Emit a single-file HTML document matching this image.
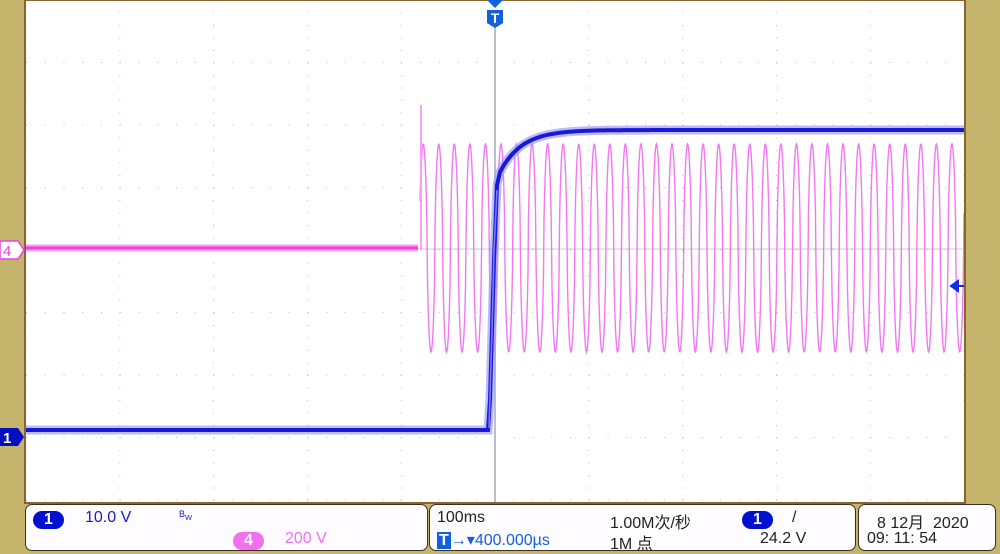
<!DOCTYPE html>
<html><head><meta charset="utf-8"><style>
body{margin:0;width:1000px;height:554px;background:#c4b46c;overflow:hidden;font-family:"Liberation Sans","Noto Sans CJK SC",sans-serif;position:relative}
.box{position:absolute;top:504px;height:47px;background:#fffcff;border:1.5px solid #3a3020;border-radius:7px;box-sizing:border-box}
.t{position:absolute;font-size:16px;white-space:nowrap}
.pill{position:absolute;border-radius:9px;color:#fff;font-weight:bold;font-size:16px;text-align:center;line-height:18px;height:18px;width:31px}
</style></head><body>
<svg id="s" width="1000" height="504" style="position:absolute;left:0;top:0">
<rect x="25" y="0" width="940" height="503" fill="#fff"/>
<g id="grid" fill="#b8bcc8"></g>
<line x1="495" y1="26" x2="495" y2="503" stroke="#b8c0cc" stroke-width="2"/>
<line x1="26" y1="249" x2="964" y2="249" stroke="#c8ccd4" stroke-width="1"/>
<path id="pink" fill="none" stroke="#f060f0" stroke-width="1.4" opacity="0.85"/>
<line x1="26" y1="248" x2="418" y2="248" stroke="#f8a0f0" stroke-width="7"/>
<line x1="26" y1="248" x2="418" y2="248" stroke="#f040e0" stroke-width="3"/>
<line x1="421" y1="105" x2="421" y2="250" stroke="#f8a0f8" stroke-width="2"/>
<path id="blueh" fill="none" stroke="#a0a0f8" stroke-width="9" opacity="0.7"/>
<path id="blue" fill="none" stroke="#1818d8" stroke-width="4"/>
<path d="M489,428 L492,330 L494,250 L497,190" fill="none" stroke="#8080f0" stroke-width="1.5"/>
<rect x="25" y="0" width="940" height="503" fill="none" stroke="#8a6430" stroke-width="2"/>
<path d="M487,0 L503,0 L495,8 Z" fill="#1060e0"/>
<path d="M487,10 L503,10 L503,23 L495,28 L487,23 Z" fill="#1060e0"/>
<text x="495" y="23" text-anchor="middle" fill="#fff" font-size="14" font-weight="bold" font-family="Liberation Sans">T</text>
<path d="M0,241 L18,241 L24,250 L18,259 L0,259 Z" fill="#fff" stroke="#f040e0" stroke-width="1.5"/>
<text x="3" y="256" fill="#f040e0" font-size="15" font-family="Liberation Sans">4</text>
<path d="M0,428 L18,428 L24,437 L18,446 L0,446 Z" fill="#0010c0"/>
<text x="3" y="443" fill="#fff" font-size="15" font-weight="bold" font-family="Liberation Sans">1</text>
<path d="M951,286 L958,281 L958,291 Z M956,286 L964,286" fill="#1030e0" stroke="#1030e0" stroke-width="2"/>
</svg>
<div class="box" style="left:25px;width:403px"></div>
<div class="box" style="left:429px;width:427px"></div>
<div class="box" style="left:858px;width:138px"></div>
<div class="pill" style="left:33px;top:511px;background:#0010d0">1</div>
<div class="t" style="left:85px;top:509px;color:#1a1ad0">10.0 V</div>
<div class="t" style="left:179px;top:509px;color:#1a1ad0;font-size:9px">B<sub>W</sub></div>
<div class="pill" style="left:233px;top:532px;background:#f070f0">4</div>
<div class="t" style="left:285px;top:530px;color:#f070f0">200 V</div>
<div class="t" style="left:437px;top:509px;color:#222">100ms</div>
<div class="t" style="left:437px;top:530px;color:#1060e0"><span style="background:#1060e0;color:#fff;font-weight:bold;padding:0 2px">T</span>→▾400.000µs</div>
<div class="t" style="left:610px;top:509px;color:#222">1.00M次/秒</div>
<div class="t" style="left:610px;top:530px;color:#222">1M 点</div>
<div class="pill" style="left:742px;top:511px;background:#0010d0">1</div>
<div class="t" style="left:792px;top:509px;color:#222">/</div>
<div class="t" style="left:760px;top:530px;color:#222">24.2 V</div>
<div class="t" style="left:877px;top:509px;color:#222">8 12月&nbsp;&nbsp;2020</div>
<div class="t" style="left:867px;top:530px;color:#222">09: 11: 54</div>
<script>
var g=document.getElementById('grid'),h='';
for(var i=0;i<=10;i++){var x=26+i*93.8;for(var y=0;y<503;y+=12.5)h+='<rect x="'+(x-0.5)+'" y="'+y+'" width="1" height="1"/>';}
for(var j=0;j<=8;j++){var y2=j*62.5;for(var x2=26;x2<964;x2+=18.76)h+='<rect x="'+x2+'" y="'+(y2-0.5)+'" width="1" height="1"/>';}
g.innerHTML=h;
var d='';var P=15.55;
for(var x=420;x<=964;x+=0.5){var ph=(x-431)/P*2*Math.PI;var v=Math.cos(ph);var s=Math.sign(v)*Math.pow(Math.abs(v),0.6);var y=248+104*s;d+=(x==420?'M':'L')+x+','+y.toFixed(1);}
document.getElementById('pink').setAttribute('d',d);
var b='M26,430 L488,430 L490,400 L492,330 L494,260 L497,185 L500,172';
for(var x=500;x<=964;x+=4){var y=130+42*Math.exp(-(x-500)/22);b+=' L'+x+','+y.toFixed(1);}
document.getElementById('blue').setAttribute('d',b);
document.getElementById('blueh').setAttribute('d',b);
</script>
</body></html>
